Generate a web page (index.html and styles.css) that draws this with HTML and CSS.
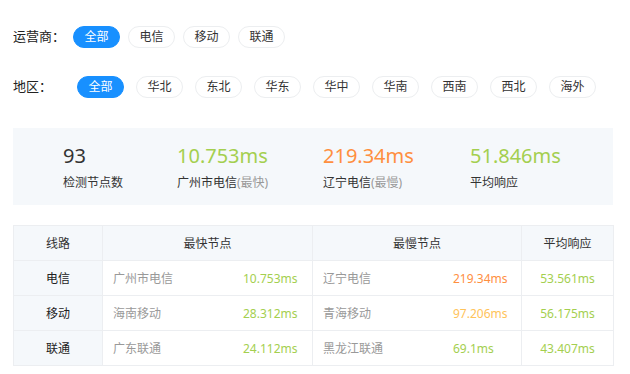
FILE: index.html
```html
<!DOCTYPE html>
<html lang="zh-CN">
<head>
<meta charset="utf-8">
<title>节点检测</title>
<link rel="stylesheet" href="styles.css">
</head>
<body>
<div class="page">
  <div class="filter filter-isp">
    <span class="filter-label">运营商：</span>
    <div class="pills">
      <span class="pill active">全部</span>
      <span class="pill">电信</span>
      <span class="pill">移动</span>
      <span class="pill">联通</span>
    </div>
  </div>
  <div class="filter filter-region">
    <span class="filter-label">地区：</span>
    <div class="pills">
      <span class="pill active">全部</span>
      <span class="pill">华北</span>
      <span class="pill">东北</span>
      <span class="pill">华东</span>
      <span class="pill">华中</span>
      <span class="pill">华南</span>
      <span class="pill">西南</span>
      <span class="pill">西北</span>
      <span class="pill">海外</span>
    </div>
  </div>

  <div class="stats">
    <div class="stat stat-count">
      <div class="stat-value">93</div>
      <div class="stat-label">检测节点数</div>
    </div>
    <div class="stat stat-fast">
      <div class="stat-value green">10.753ms</div>
      <div class="stat-label">广州市电信<span class="muted">(最快)</span></div>
    </div>
    <div class="stat stat-slow">
      <div class="stat-value orange">219.34ms</div>
      <div class="stat-label">辽宁电信<span class="muted">(最慢)</span></div>
    </div>
    <div class="stat stat-avg">
      <div class="stat-value green">51.846ms</div>
      <div class="stat-label">平均响应</div>
    </div>
  </div>

  <table class="grid">
    <colgroup>
      <col class="c-line">
      <col class="c-fast">
      <col class="c-slow">
      <col class="c-avg">
    </colgroup>
    <thead>
      <tr><th>线路</th><th>最快节点</th><th>最慢节点</th><th>平均响应</th></tr>
    </thead>
    <tbody>
      <tr>
        <td class="line">电信</td>
        <td class="node"><span class="name">广州市电信</span><span class="green">10.753ms</span></td>
        <td class="node"><span class="name">辽宁电信</span><span class="orange">219.34ms</span></td>
        <td class="avg green">53.561ms</td>
      </tr>
      <tr>
        <td class="line">移动</td>
        <td class="node"><span class="name">海南移动</span><span class="green">28.312ms</span></td>
        <td class="node"><span class="name">青海移动</span><span class="yellow">97.206ms</span></td>
        <td class="avg green">56.175ms</td>
      </tr>
      <tr>
        <td class="line">联通</td>
        <td class="node"><span class="name">广东联通</span><span class="green">24.112ms</span></td>
        <td class="node"><span class="name">黑龙江联通</span><span class="green">69.1ms</span></td>
        <td class="avg green">43.407ms</td>
      </tr>
    </tbody>
  </table>
</div>
</body>
</html>
```

FILE: styles.css
```css
html, body {
  margin: 0;
  padding: 0;
  background: #fff;
}
body {
  font-family: "Noto Sans", "Noto Sans CJK SC", sans-serif;
  color: #333;
  font-size: 12px;
}
.page {
  width: 600px;
  padding: 26px 0 0 13px;
}
.filter {
  display: flex;
  align-items: center;
  height: 22px;
}
.filter-region {
  margin-top: 28px;
}
.filter-label {
  font-size: 13px;
  line-height: 18px;
  color: #222;
  margin-top: -2px;
}
.filter-isp .filter-label { width: 60px; }
.filter-region .filter-label { width: 64px; }
.pills {
  display: flex;
}
.filter-isp .pills { gap: 8px; }
.filter-region .pills { gap: 12px; }
.pill {
  box-sizing: border-box;
  width: 47px;
  height: 22px;
  line-height: 20px;
  text-align: center;
  border: 1px solid #eceef0;
  border-radius: 11px;
  font-size: 12px;
  color: #333;
  background: #fff;
}
.pill.active {
  background: #1890ff;
  border-color: #1890ff;
  color: #fff;
}

.stats {
  margin-top: 30px;
  height: 77px;
  box-sizing: border-box;
  background: #f5f8fb;
  display: flex;
  padding: 14px 0 0 50px;
}
.stat-count { width: 114px; }
.stat-fast { width: 146px; }
.stat-slow { width: 147px; }
.stat-value {
  font-size: 20px;
  line-height: 28px;
  color: #333;
}
.stat-label {
  margin-top: 4px;
  font-size: 12px;
  line-height: 18px;
  color: #333;
}
.muted { color: #999; }
.green { color: #a4cf4f; }
.orange { color: #ff8f3f; }
.yellow { color: #ffc35a; }

.grid {
  margin-top: 20px;
  border-collapse: collapse;
  table-layout: fixed;
  width: 600px;
}
.c-line { width: 89px; }
.c-fast { width: 210px; }
.c-slow { width: 209px; }
.c-avg { width: 92px; }
.grid th, .grid td {
  border: 1px solid #eceef1;
  height: 34px;
  padding: 0;
  font-size: 12px;
  font-weight: normal;
  white-space: nowrap;
}
.grid th {
  background: #f5f8fb;
  color: #333;
  text-align: center;
}
.grid td.line {
  background: #f5f8fb;
  text-align: center;
  color: #222;
}
.grid td.node {
  padding-left: 10px;
}
.grid td.node .name {
  display: inline-block;
  width: 130px;
  color: #999;
}
.grid td.avg {
  text-align: center;
}
```
